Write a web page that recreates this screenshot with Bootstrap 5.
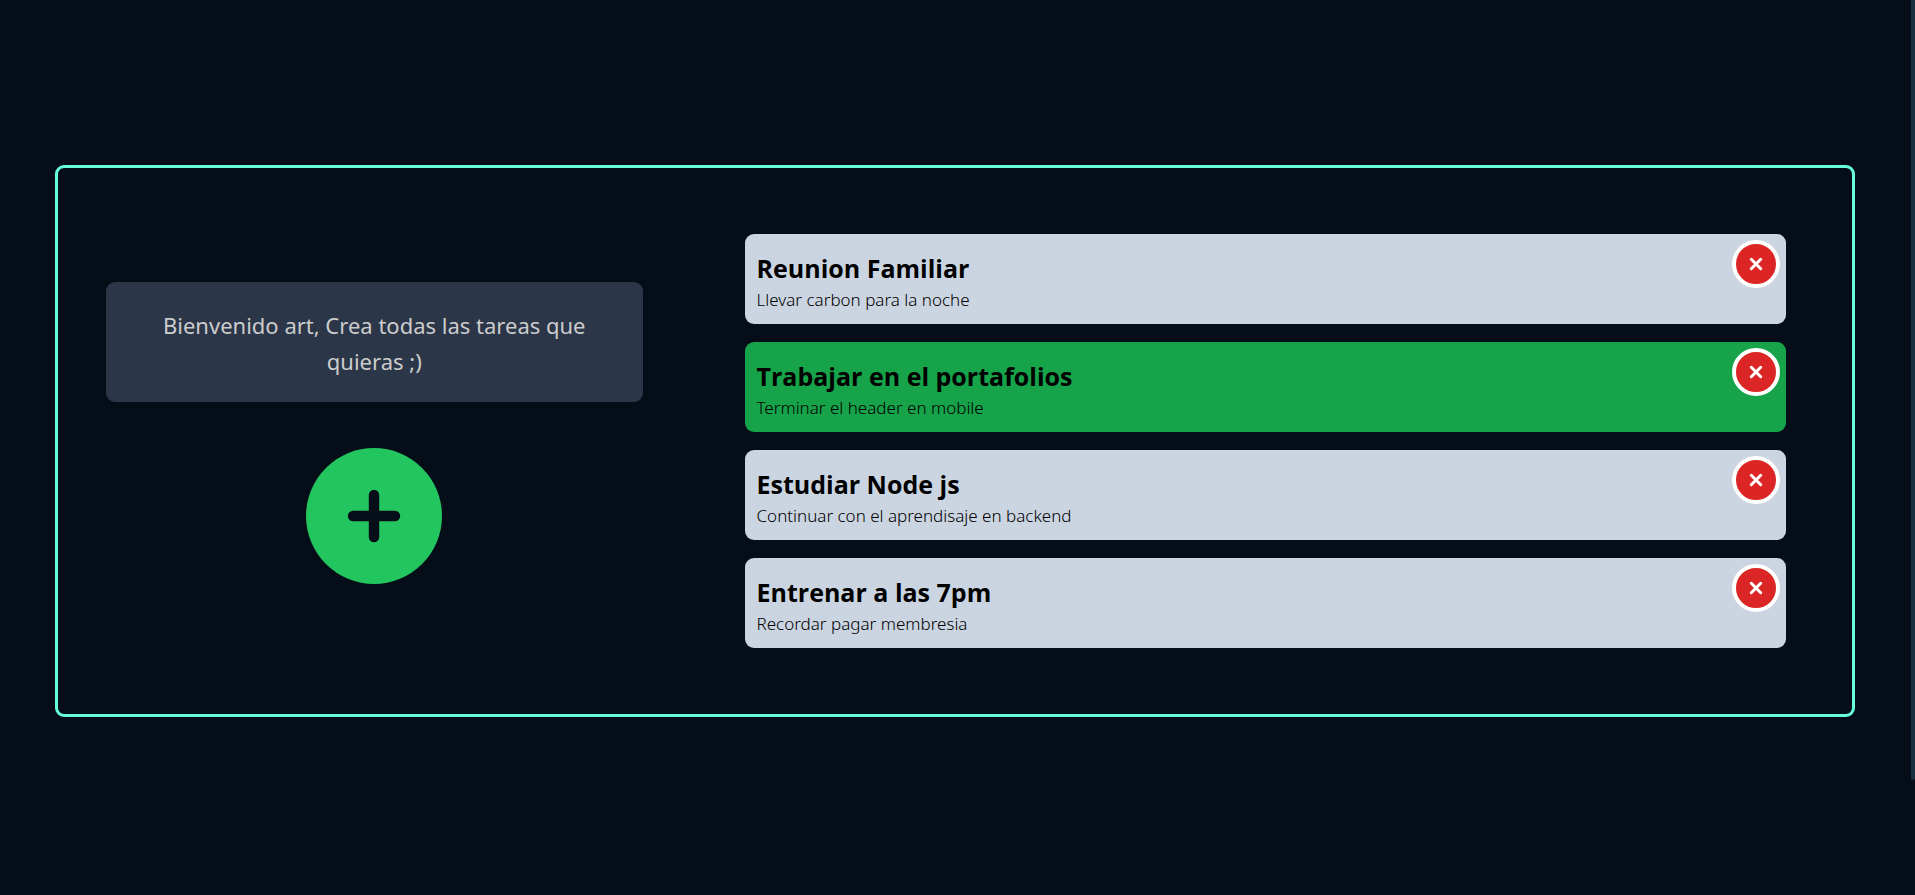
<!DOCTYPE html>
<html lang="es">
<head>
<meta charset="utf-8">
<meta name="viewport" content="width=device-width, initial-scale=1">
<title>Tareas</title>
<link href="https://cdn.jsdelivr.net/npm/bootstrap@5.3.0/dist/css/bootstrap.min.css" rel="stylesheet">
<style>
  body { background: #050d19; color: #000; font-family: "Noto Sans", "Open Sans", sans-serif; }
  .page { padding: 0 60px 13px 55px; }
  .board { border: 3px solid #64ffda; border-radius: 9px; padding: 66px 66px 66px 48px; }
  .board-grid { display: grid; grid-template-columns: 34fr 66fr; column-gap: 102px; align-items: center; }
  .side { gap: 46px; padding-bottom: 16px; }
  .welcome { background: #2b3648; color: #ccc; border-radius: 9px; padding: 25px 36px 23px; font-size: 22px; line-height: 36px; }
  .add-btn { width: 136px; height: 136px; background: #22c55e; color: #050d19; }
  .tasks { gap: 18px; }
  .task { min-height: 90px; background: #cbd5e1; border-radius: 9px; padding: 4px 12px 0; }
  .task.done { background: #16a34a; }
  .task h2 { font-family: "Open Sans", sans-serif; font-size: 25px; line-height: 36px; font-weight: 700; }
  .task p { font-size: 17px; line-height: 27px; font-weight: 300; }
  .del-btn { top: 6px; right: 6px; width: 48px; height: 48px; border: 4px solid #fff; background: #dc2626; color: #fff; }
  .scroll-thumb { width: 4px; height: 780px; max-height: 100%; background: #172f40; border-radius: 0 0 4px 4px; }
</style>
</head>
<body>
<svg class="d-none" xmlns="http://www.w3.org/2000/svg">
  <symbol id="x" viewBox="0 0 14 14"><path d="M2.3 2.3l9.4 9.4M11.7 2.3l-9.4 9.4" fill="none" stroke="currentColor" stroke-width="3" stroke-linecap="round"/></symbol>
</svg>
<main class="page min-vh-100 d-flex flex-column justify-content-center">
  <section class="board">
    <div class="board-grid">
      <div class="side d-flex flex-column align-items-center">
        <p class="welcome w-100 m-0 text-center">Bienvenido art, Crea todas las tareas que quieras ;)</p>
        <button type="button" class="add-btn border-0 rounded-circle p-0 d-flex align-items-center justify-content-center" aria-label="Agregar tarea">
          <svg width="54" height="54" viewBox="0 0 54 54"><path d="M27 6v42M6 27h42" fill="none" stroke="currentColor" stroke-width="10.4" stroke-linecap="round"/></svg>
        </button>
      </div>
      <ul class="tasks list-unstyled m-0 d-flex flex-column">
        <li class="task position-relative d-flex flex-column justify-content-center">
          <h2 class="m-0">Reunion Familiar</h2>
          <p class="m-0">Llevar carbon para la noche</p>
          <button type="button" class="del-btn position-absolute rounded-circle p-0 d-flex align-items-center justify-content-center" aria-label="Eliminar"><svg width="14" height="14"><use href="#x"/></svg></button>
        </li>
        <li class="task done position-relative d-flex flex-column justify-content-center">
          <h2 class="m-0">Trabajar en el portafolios</h2>
          <p class="m-0">Terminar el header en mobile</p>
          <button type="button" class="del-btn position-absolute rounded-circle p-0 d-flex align-items-center justify-content-center" aria-label="Eliminar"><svg width="14" height="14"><use href="#x"/></svg></button>
        </li>
        <li class="task position-relative d-flex flex-column justify-content-center">
          <h2 class="m-0">Estudiar Node js</h2>
          <p class="m-0">Continuar con el aprendisaje en backend</p>
          <button type="button" class="del-btn position-absolute rounded-circle p-0 d-flex align-items-center justify-content-center" aria-label="Eliminar"><svg width="14" height="14"><use href="#x"/></svg></button>
        </li>
        <li class="task position-relative d-flex flex-column justify-content-center">
          <h2 class="m-0">Entrenar a las 7pm</h2>
          <p class="m-0">Recordar pagar membresia</p>
          <button type="button" class="del-btn position-absolute rounded-circle p-0 d-flex align-items-center justify-content-center" aria-label="Eliminar"><svg width="14" height="14"><use href="#x"/></svg></button>
        </li>
      </ul>
    </div>
  </section>
</main>
<div class="scroll-thumb position-fixed top-0 end-0"></div>
<script src="https://cdn.jsdelivr.net/npm/bootstrap@5.3.0/dist/js/bootstrap.bundle.min.js"></script>
</body>
</html>
